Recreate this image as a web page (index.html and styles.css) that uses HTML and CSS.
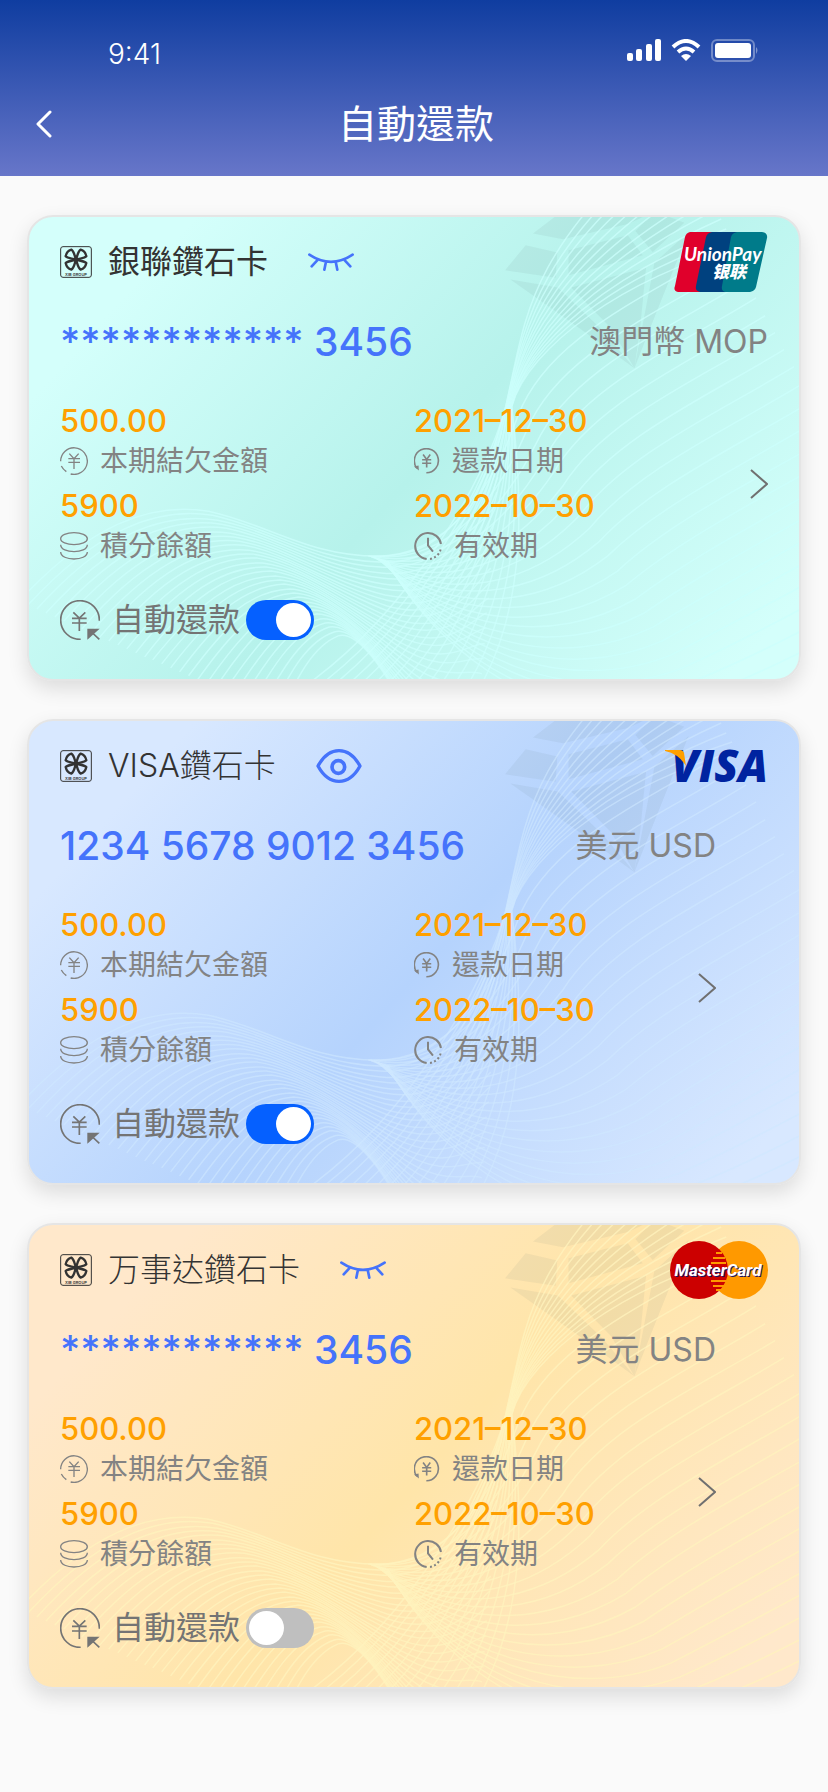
FILE: index.html
```html
<!DOCTYPE html>
<html lang="zh-Hant">
<head>
<meta charset="utf-8">
<meta name="viewport" content="width=device-width, initial-scale=1">
<title>自動還款</title>
<link rel="stylesheet" href="styles.css">
</head>
<body>
<svg class="defs" aria-hidden="true">
  <symbol id="art" viewBox="0 0 772 464" preserveAspectRatio="xMaxYMin slice">
    <g class="gem" transform="translate(392 -10) scale(.3333)">
      <path d="M340 80L405 30H670L628 50L430 97ZM648 72L690 30H750L795 47L700 135ZM318 115L413 137L408 213L256 190ZM447 130L625 85L670 145L447 205ZM272 218L415 242L548 370L645 485L480 365ZM455 242L680 183L662 365H575ZM575 365H662L645 485ZM705 168L808 75L690 370L645 485L682 290Z"/>
    </g>
    <g id="waves" class="waves"></g>
  </symbol>
  <symbol id="clover" viewBox="0 0 96 96">
    <rect x="2" y="2" width="92" height="92" rx="7" fill="none" stroke="currentColor" stroke-width="3"/>
    <g fill="none" stroke="currentColor" stroke-width="7" stroke-linejoin="round">
      <path d="M48 41C36 37 22 37 17 31C19 21 26 13 34 11C42 15 44 30 48 41Z"/>
      <path d="M48 41C60 37 74 37 79 31C77 21 70 13 62 11C54 15 52 30 48 41Z"/>
      <path d="M48 41C36 45 22 45 17 51C19 61 26 69 34 71C42 67 44 52 48 41Z"/>
      <path d="M48 41C60 45 74 45 79 51C77 61 70 69 62 71C54 67 52 52 48 41Z"/>
    </g>
    <circle cx="48" cy="41" r="6" fill="currentColor"/>
  </symbol>
  <symbol id="eye-closed" viewBox="0 0 138 54">
    <path d="M4 5Q69 48 134 5M27 23L11 40M53 31L49 50M84 31L88 50M111 23L127 40" fill="none" stroke="currentColor" stroke-width="8" stroke-linecap="round"/>
  </symbol>
  <symbol id="eye-open" viewBox="0 0 136 102">
    <path d="M5 51C22 20 44 5 68 5S114 20 131 51C114 82 92 97 68 97S22 82 5 51Z" fill="none" stroke="currentColor" stroke-width="10" stroke-linejoin="round"/>
    <circle cx="66" cy="54" r="19" fill="none" stroke="currentColor" stroke-width="11"/>
  </symbol>
  <symbol id="due" viewBox="0 0 84 84">
    <path d="M2 43A40 40 0 1 1 32 81M4 57Q9 67 19 74M28 20L42 35L56 20M25 35H60M25 46H60M42 35V66" fill="none" stroke="currentColor" stroke-width="4"/>
  </symbol>
  <symbol id="coins" viewBox="0 0 84 84">
    <path d="M2 20A40 18 0 1 1 82 20A40 18 0 1 1 2 20M2 38C2 66 82 66 82 38M2 60C2 88 82 88 82 60" fill="none" stroke="currentColor" stroke-width="4"/>
  </symbol>
  <symbol id="repay" viewBox="0 0 80 80">
    <path d="M9 62A37 37 0 1 1 38 76" fill="none" stroke="currentColor" stroke-width="5"/>
    <path d="M0 57L14 54L15 69Z" fill="currentColor"/>
    <path d="M28 20L39 35L50 20M25 36H53M25 47H53M39 34V60" fill="none" stroke="currentColor" stroke-width="5"/>
  </symbol>
  <symbol id="clock" viewBox="0 0 84 84">
    <path d="M81 36A39 39 0 1 0 38 81M42 17V40L57 59" fill="none" stroke="currentColor" stroke-width="6"/>
    <path d="M48 81A39 39 0 0 0 81 46" fill="none" stroke="currentColor" stroke-width="6" stroke-dasharray="6 7"/>
  </symbol>
  <symbol id="auto" viewBox="0 0 120 120">
    <path d="M118 62A58 58 0 1 0 62 118M40 37L58 54L76 37M36 55H80M36 69H80M58 54V93M88 90L118 118" fill="none" stroke="currentColor" stroke-width="5"/>
    <path d="M82 86H119L82 119Z" fill="currentColor"/>
  </symbol>
  <symbol id="next" viewBox="0 0 18 30">
    <path d="M1 1L17 15L1 29" fill="none" stroke="currentColor" stroke-width="2"/>
  </symbol>
</svg>

<header class="top">
  <div class="status">
    <span class="time">9:41</span>
    <span class="signals">
      <svg width="34" height="22" viewBox="0 0 34 22" aria-hidden="true"><g fill="#fff"><rect y="14" width="6" height="8" rx="2"/><rect x="9" y="10" width="6" height="12" rx="2"/><rect x="19" y="5" width="6" height="17" rx="2"/><rect x="28" width="6" height="22" rx="2"/></g></svg>
      <svg width="30" height="22" viewBox="0 0 30 22" aria-hidden="true"><g fill="none" stroke="#fff" stroke-width="4"><path d="M2 8Q15 -4 28 8M7 13Q15 6 23 13"/></g><path d="M10 17Q15 13 20 17L15 22Z" fill="#fff"/></svg>
      <svg width="48" height="23" viewBox="0 0 48 23" aria-hidden="true"><rect x="1" y="1" width="42" height="21" rx="5" fill="none" stroke="#fff" stroke-opacity=".35" stroke-width="2"/><rect x="4" y="4" width="36" height="15" rx="3" fill="#fff"/><path d="M45 8Q48 11 45 15Z" fill="#fff" fill-opacity=".4"/></svg>
    </span>
  </div>
  <div class="nav">
    <button class="back" type="button" aria-label="返回"><svg width="16" height="28" viewBox="0 0 16 28"><path d="M14 2L2 14L14 26" fill="none" stroke="#fff" stroke-width="3" stroke-linecap="round" stroke-linejoin="round"/></svg></button>
    <h1>自動還款</h1>
  </div>
</header>

<main class="cards">
  <article class="card card-union">
    <svg class="art" aria-hidden="true"><use href="#art"/></svg>
    <div class="head">
      <svg class="group" viewBox="0 0 96 96" role="img" aria-label="XIB Group"><use href="#clover"/><text x="48" y="89" text-anchor="middle">XIB GROUP</text></svg>
      <h2>銀聯鑽石卡</h2>
      <button class="eye" type="button" aria-label="顯示卡號"><svg width="46" height="18"><use href="#eye-closed"/></svg></button>
      <svg class="brand" width="94" height="60" viewBox="0 0 94 60" role="img" aria-label="UnionPay">
        <path d="M16 0H40L28 60H4Q-1 59 1 54L11 5Q12 1 16 0Z" fill="#e0002b"/>
        <path d="M38 0H66L54 60H26Q21 59 22 54L32 5Q33 1 38 0Z" fill="#00417f"/>
        <path d="M63 0H88Q94 1 93 6L82 55Q81 59 76 60H51Q47 59 48 54L57 5Q58 1 63 0Z" fill="#007b8a"/>
        <text class="up-latin" x="10" y="29">UnionPay</text>
        <text class="up-han" x="38" y="46">银联</text>
      </svg>
    </div>
    <div class="account"><span class="number">************ 3456</span><span class="currency">澳門幣 MOP</span></div>
    <div class="body">
      <dl class="stats">
        <div><dd>500.00</dd><dt><svg width="28" height="28"><use href="#due"/></svg>本期結欠金額</dt></div>
        <div><dd>2021–12–30</dd><dt><svg width="26" height="26"><use href="#repay"/></svg>還款日期</dt></div>
        <div><dd>5900</dd><dt><svg width="28" height="28"><use href="#coins"/></svg>積分餘額</dt></div>
        <div><dd>2022–10–30</dd><dt><svg width="28" height="28"><use href="#clock"/></svg>有效期</dt></div>
      </dl>
      <button class="next" type="button" aria-label="詳情"><svg width="18" height="30"><use href="#next"/></svg></button>
    </div>
    <label class="auto"><svg width="40" height="40"><use href="#auto"/></svg><span>自動還款</span><input type="checkbox" role="switch" checked></label>
  </article>

  <article class="card card-visa">
    <svg class="art" aria-hidden="true"><use href="#art"/></svg>
    <div class="head">
      <svg class="group" viewBox="0 0 96 96" role="img" aria-label="XIB Group"><use href="#clover"/><text x="48" y="89" text-anchor="middle">XIB GROUP</text></svg>
      <h2>VISA鑽石卡</h2>
      <button class="eye" type="button" aria-label="隱藏卡號"><svg width="46" height="34"><use href="#eye-open"/></svg></button>
      <svg class="brand" width="104" height="34" viewBox="0 0 104 34" role="img" aria-label="VISA">
        <text class="visa-word" x="104" y="33" text-anchor="end">VISA</text>
        <path d="M1 1H16Q19 1 20 4L22 17Q15 5 1 2Z" fill="#ffa000"/>
      </svg>
    </div>
    <div class="account"><span class="number">1234 5678 9012 3456</span><span class="currency">美元 USD</span></div>
    <div class="body">
      <dl class="stats">
        <div><dd>500.00</dd><dt><svg width="28" height="28"><use href="#due"/></svg>本期結欠金額</dt></div>
        <div><dd>2021–12–30</dd><dt><svg width="26" height="26"><use href="#repay"/></svg>還款日期</dt></div>
        <div><dd>5900</dd><dt><svg width="28" height="28"><use href="#coins"/></svg>積分餘額</dt></div>
        <div><dd>2022–10–30</dd><dt><svg width="28" height="28"><use href="#clock"/></svg>有效期</dt></div>
      </dl>
      <button class="next" type="button" aria-label="詳情"><svg width="18" height="30"><use href="#next"/></svg></button>
    </div>
    <label class="auto"><svg width="40" height="40"><use href="#auto"/></svg><span>自動還款</span><input type="checkbox" role="switch" checked></label>
  </article>

  <article class="card card-master">
    <svg class="art" aria-hidden="true"><use href="#art"/></svg>
    <div class="head">
      <svg class="group" viewBox="0 0 96 96" role="img" aria-label="XIB Group"><use href="#clover"/><text x="48" y="89" text-anchor="middle">XIB GROUP</text></svg>
      <h2>万事达鑽石卡</h2>
      <button class="eye" type="button" aria-label="顯示卡號"><svg width="46" height="18"><use href="#eye-closed"/></svg></button>
      <svg class="brand" width="98" height="58" viewBox="0 0 98 58" role="img" aria-label="MasterCard">
        <circle cx="69" cy="29" r="29" fill="#ff9900"/>
        <circle cx="29" cy="29" r="29" fill="#cc0000"/>
        <path d="M46 12H52M43 17H55M41 22H56M41 40H56M43 45H54M46 49H52" stroke="#ff9900" stroke-width="2"/>
        <text class="mc-word" x="48" y="35" text-anchor="middle">MasterCard</text>
      </svg>
    </div>
    <div class="account"><span class="number">************ 3456</span><span class="currency">美元 USD</span></div>
    <div class="body">
      <dl class="stats">
        <div><dd>500.00</dd><dt><svg width="28" height="28"><use href="#due"/></svg>本期結欠金額</dt></div>
        <div><dd>2021–12–30</dd><dt><svg width="26" height="26"><use href="#repay"/></svg>還款日期</dt></div>
        <div><dd>5900</dd><dt><svg width="28" height="28"><use href="#coins"/></svg>積分餘額</dt></div>
        <div><dd>2022–10–30</dd><dt><svg width="28" height="28"><use href="#clock"/></svg>有效期</dt></div>
      </dl>
      <button class="next" type="button" aria-label="詳情"><svg width="18" height="30"><use href="#next"/></svg></button>
    </div>
    <label class="auto"><svg width="40" height="40"><use href="#auto"/></svg><span>自動還款</span><input type="checkbox" role="switch"></label>
  </article>
</main>
<script src="waves.js"></script>
</body>
</html>
```
FILE: styles.css
```css
* { box-sizing: border-box; }
body {
  margin: 0;
  background: #fafafa;
  font-family: Inter, "Noto Sans CJK TC", sans-serif;
  color: #333;
}
h1, h2, dl, dd, dt { margin: 0; font-weight: 400; }
svg { display: block; flex: none; }
button { padding: 0; border: 0; background: none; color: inherit; cursor: pointer; }
.defs { position: absolute; width: 0; height: 0; }

.top {
  padding: 36px 0 24px;
  color: #fff;
  background: linear-gradient(#0f3da0, #6776c9);
}
.status {
  display: flex;
  justify-content: space-between;
  align-items: center;
  height: 36px;
  padding: 0 69px 0 108px;
}
.time { font-size: 28px; font-weight: 300; line-height: 36px; }
.signals { display: flex; align-items: center; gap: 10px; height: 28px; align-self: flex-start; }
.nav {
  display: grid;
  grid-template-columns: 80px 1fr 76px;
  align-items: center;
  padding-top: 24px;
}
.back { display: flex; padding-left: 36px; }
h1 { font-size: 39px; line-height: 56px; text-align: center; }

.cards {
  display: flex;
  flex-direction: column;
  gap: 38px;
  padding: 39px 27px;
}
.card {
  position: relative;
  padding: 15px 31px 39px;
  border: 2px solid #e5e5e5;
  border-radius: 26px;
  overflow: hidden;
  box-shadow: 0 8px 20px rgba(0, 0, 0, .12);
}
.card-union {
  --line: rgba(204, 255, 252, .75);
  background: linear-gradient(132deg, #d4fffb 14%, #b6f2eb 52%, #d4fffb 94%);
}
.card-visa {
  --line: rgba(207, 232, 255, .6);
  background: linear-gradient(132deg, #d8e8ff 14%, #b5d3fd 52%, #d8e8ff 94%);
}
.card-master {
  --line: rgba(255, 243, 190, .75);
  background: linear-gradient(132deg, #ffe8cb 14%, #ffe5a9 52%, #ffe8cb 94%);
}
.art { position: absolute; inset: 0; width: 100%; height: 100%; }
.gem { fill: rgba(90, 110, 110, .08); }
.waves { fill: none; stroke: var(--line); stroke-width: 1.5; }
.card > :not(.art) { position: relative; }

.head { display: flex; align-items: center; height: 60px; }
.group { width: 32px; height: 32px; margin-right: 16px; }
.group text { font: 600 12px Inter, sans-serif; fill: currentColor; }
h2 { font-size: 32px; line-height: 40px; }
.card-visa h2, .card-master h2 { font-weight: 300; }
.eye { margin-left: 40px; color: #4573fb; }
.brand { margin-left: auto; overflow: visible; }

.account {
  display: flex;
  justify-content: space-between;
  align-items: center;
  height: 48px;
  margin-top: 26px;
}
.number, .currency { line-height: 48px; }
.number { font-size: 39px; font-weight: 500; color: #4573fb; white-space: pre; }
.currency { font-size: 32px; color: #838383; }

.body { display: flex; align-items: center; margin-top: 35px; color: #707070; }
.stats {
  flex: 1;
  display: grid;
  grid-template-columns: 354px 1fr;
  row-gap: 5px;
}
.stats div { display: flex; flex-direction: column; }
dd { font-size: 31px; line-height: 40px; font-weight: 500; color: #ffa000; }
dt {
  display: flex;
  align-items: center;
  gap: 12px;
  font-size: 28px;
  line-height: 40px;
  color: #838383;
}
.card-visa .account, .card-visa .body,
.card-master .account, .card-master .body { padding-right: 52px; }

.auto {
  display: flex;
  align-items: center;
  width: max-content;
  height: 40px;
  margin-top: 34px;
  font-size: 32px;
  line-height: 40px;
  color: #747474;
}
.auto span { margin: 0 6px 0 12px; }
.auto input {
  appearance: none;
  width: 68px;
  height: 40px;
  margin: 0;
  padding: 3px;
  border-radius: 20px;
  background: #bfbfbf;
}
.auto input::before {
  content: "";
  display: block;
  width: 35px;
  height: 34px;
  border-radius: 50%;
  background: #fff;
}
.auto input:checked { background: #0560ff; }
.auto input:checked::before { margin-left: auto; }

.up-latin { font: italic 700 19px Lato, sans-serif; fill: #fff; }
.up-han { font: italic 900 17px "Noto Sans CJK SC", sans-serif; fill: #fff; }
.visa-word { font: italic 800 44px "Open Sans", sans-serif; fill: #0023a0; }
.mc-word {
  font: italic 700 17px Roboto, sans-serif;
  fill: #fff;
  text-shadow: 1px 1px 0 #1b1464;
}
```
FILE: waves.js
```js
// Each family of lines is blended between its first and last curve.
// A curve is a flat list: start point, then three points per cubic segment.
const families = [
  {
    count: 30,
    from: [-10, 385, 60, 310, 120, 285, 180, 295, 240, 308, 280, 340, 350, 340, 440, 342, 465, 240, 475, 200],
    to: [250, 500, 270, 460, 285, 430, 310, 420, 325, 415, 350, 440, 380, 500, 400, 560, 420, 600, 440, 640]
  },
  {
    count: 14,
    from: [270, 475, 380, 400, 460, 260, 478, 190, 500, 90, 500, 40, 640, -90],
    to: [450, 475, 500, 390, 495, 280, 484, 190, 500, 130, 600, 60, 710, 30]
  },
  {
    count: 22,
    from: [340, 340, 420, 345, 465, 270, 490, 200, 520, 120, 620, 80, 700, 30],
    to: [360, 345, 420, 460, 560, 530, 680, 495, 760, 470, 830, 430, 900, 390]
  }
];

const waves = document.getElementById("waves");
for (const { count, from, to } of families) {
  for (let i = 0; i < count; i++) {
    const t = i / (count - 1);
    const p = from.map((v, k) => Math.round(v + (to[k] - v) * t));
    const path = document.createElementNS("http://www.w3.org/2000/svg", "path");
    path.setAttribute("d", "M" + p.slice(0, 2) + "C" + p.slice(2));
    waves.appendChild(path);
  }
}
```
